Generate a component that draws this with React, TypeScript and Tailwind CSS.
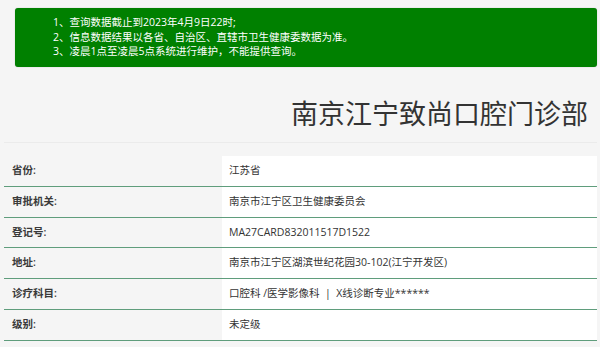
import React from "react";

const rows: { label: string; value: string }[] = [
  { label: "省份:", value: "江苏省" },
  { label: "审批机关:", value: "南京市江宁区卫生健康委员会" },
  { label: "登记号:", value: "MA27CARD832011517D1522" },
  { label: "地址:", value: "南京市江宁区湖滨世纪花园30-102(江宁开发区)" },
  { label: "诊疗科目:", value: "口腔科 /医学影像科  |  X线诊断专业******" },
  { label: "级别:", value: "未定级" },
];

export default function App() {
  return (
    <div
      className="w-[600px] h-[347px] overflow-hidden bg-[#f5f5f5] pt-[8px]"
      style={{ fontFamily: '"Open Sans", "Noto Sans CJK SC", sans-serif' }}
    >
      <div className="ml-[15px] mr-[3px] h-[59px] bg-[#008000] rounded-[3px] shadow-[0_0_1px_rgba(0,0,0,0.35)] pl-[38px] pt-[7px] text-white text-[10.5px] leading-[14.5px]">
        <div>1、查询数据截止到2023年4月9日22时;</div>
        <div>2、信息数据结果以各省、自治区、直辖市卫生健康委数据为准。</div>
        <div>3、凌晨1点至凌晨5点系统进行维护，不能提供查询。</div>
      </div>

      <div className="ml-[4px] mr-[3px] pt-[28px] pb-[11px] border-b border-[#ebebeb] flex justify-end pr-[9px]">
        <h1
          className="text-[27px] leading-[36px] text-[#333] font-normal"
          style={{ fontFamily: '"Noto Sans CJK SC", sans-serif' }}
        >
          南京江宁致尚口腔门诊部
        </h1>
      </div>

      <div className="ml-[4px] mr-[3px] mt-[13px]">
        {rows.map((r) => (
          <div
            key={r.label}
            className="flex h-[30.8px] border-b border-[#5f9d7c] text-[10.5px] text-[#333]"
          >
            <div className="w-[218px] pl-[8px] flex items-center font-semibold text-[#3a3a3a]">
              {r.label}
            </div>
            <div className="flex-1 bg-white pl-[7px] flex items-center whitespace-pre">
              {r.value}
            </div>
          </div>
        ))}
      </div>
    </div>
  );
}
